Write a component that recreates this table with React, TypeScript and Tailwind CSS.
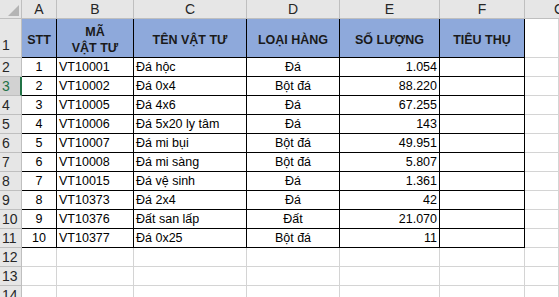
import React from 'react';

const rows = [
  ['1', 'VT10001', 'Đá hộc', 'Đá', '1.054'],
  ['2', 'VT10002', 'Đá 0x4', 'Bột đá', '88.220'],
  ['3', 'VT10005', 'Đá 4x6', 'Đá', '67.255'],
  ['4', 'VT10006', 'Đá 5x20 ly tâm', 'Đá', '143'],
  ['5', 'VT10007', 'Đá mi bụi', 'Bột đá', '49.951'],
  ['6', 'VT10008', 'Đá mi sàng', 'Bột đá', '5.807'],
  ['7', 'VT10015', 'Đá vệ sinh', 'Đá', '1.361'],
  ['8', 'VT10373', 'Đá 2x4', 'Đá', '42'],
  ['9', 'VT10376', 'Đất san lấp', 'Đất', '21.070'],
  ['10', 'VT10377', 'Đá 0x25', 'Bột đá', '11'],
];

const cols = ['A', 'B', 'C', 'D', 'E', 'F'];
const grid = 'grid grid-cols-[22px_35px_77px_113px_93px_100px_85px_1fr]';
const td = 'h-[19px] border-r border-b border-black flex items-center overflow-hidden whitespace-nowrap';

const RowHead: React.FC<{ n: number; active?: boolean; tall?: boolean }> = ({ n, active, tall }) => (
  <div
    className={`${tall ? 'h-[39px] items-end pb-[1px]' : 'h-[19px] items-center'} flex pl-[2px] text-[14px] border-b border-[#bfbfbf] ${
      active ? 'bg-[#d2d2d2] text-[#217346] border-r-2 border-r-[#217346]' : 'bg-[#e6e6e6] text-[#262626] border-r border-r-[#bfbfbf]'
    }`}
  >
    {n}
  </div>
);

const Blank: React.FC<{ tall?: boolean }> = ({ tall }) => (
  <div className={`${tall ? 'h-[39px]' : 'h-[19px]'} border-r border-b border-[#d4d4d4]`} />
);

export default function App() {
  return (
    <div className="w-[559px] h-[297px] overflow-hidden bg-white text-black text-[12.5px] font-['Liberation_Sans',Arial,sans-serif]">
      <div className={grid}>
        {/* column letters */}
        <div className="h-[19px] bg-[#e6e6e6] border-r border-b border-[#bfbfbf] relative">
          <svg className="absolute right-[2px] bottom-[2px]" width="11" height="11" viewBox="0 0 11 11">
            <polygon points="11,0 11,11 0,11" fill="#b4b4b4" />
          </svg>
        </div>
        {cols.map((c) => (
          <div key={c} className="h-[19px] bg-[#e6e6e6] border-r border-b border-[#bfbfbf] flex items-center justify-center text-[14px] text-[#262626]">
            {c}
          </div>
        ))}
        <div className="h-[19px] bg-[#e6e6e6] border-b border-[#bfbfbf] text-[14px] text-[#262626] pl-[29px] flex items-center overflow-hidden">G</div>

        {/* header row */}
        <RowHead n={1} tall />
        {['STT', 'MÃ\nVẬT TƯ', 'TÊN VẬT TƯ', 'LOẠI HÀNG', 'SỐ LƯỢNG', 'TIÊU THỤ'].map((h) => (
          <div
            key={h}
            className="h-[39px] bg-[#8ea9db] border-r border-b border-black flex items-center justify-center text-center font-bold whitespace-pre-line leading-[16px] pt-[4px] text-[#1a1a1a]"
          >
            {h}
          </div>
        ))}
        <Blank tall />

        {rows.map((r, i) => (
          <React.Fragment key={r[1]}>
            <RowHead n={i + 2} active={i === 1} />
            <div className={`${td} justify-center`}>{r[0]}</div>
            <div className={`${td} pl-[2px]`}>{r[1]}</div>
            <div className={`${td} pl-[2px]`}>{r[2]}</div>
            <div className={`${td} justify-center`}>{r[3]}</div>
            <div className={`${td} justify-end pr-[2px]`}>{r[4]}</div>
            <div className={td} />
            <Blank />
          </React.Fragment>
        ))}

        {[12, 13, 14].map((n) => (
          <React.Fragment key={n}>
            <RowHead n={n} />
            {[0, 1, 2, 3, 4, 5, 6].map((k) => (
              <Blank key={k} />
            ))}
          </React.Fragment>
        ))}
      </div>
    </div>
  );
}
